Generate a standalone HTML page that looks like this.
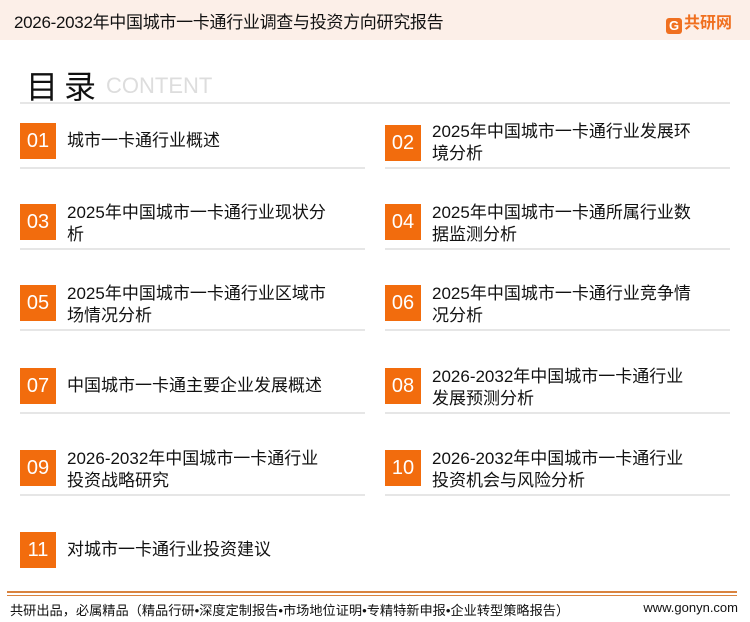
<!DOCTYPE html><html><head><meta charset="utf-8"><style>
body{margin:0;width:750px;height:622px;background:#fff;font-family:"Liberation Sans","Noto Sans CJK SC",sans-serif;position:relative;overflow:hidden;color:#111}
.hd{position:absolute;left:0;top:0;width:750px;height:40px;background:#fcefe8}
.t{position:absolute;left:14px;top:8px;font-size:17px;letter-spacing:-0.3px}
.logo{position:absolute;left:666px;top:9px;font-size:16px;font-weight:bold;color:#f07020}
.logo b{display:inline-block;width:16px;height:16px;background:#f07020;color:#fff;font-size:13px;text-align:center;line-height:16px;border-radius:3px;margin-right:2px;vertical-align:-2px}
.ml{position:absolute;left:26px;top:62px;font-size:32px;letter-spacing:6px}
.ct{position:absolute;left:106px;top:73px;font-size:22px;color:#ddd}
.hr{position:absolute;height:2px;background:#e6e6e6}
.n{position:absolute;width:36px;height:36px;background:#f26c0d;color:#fff;font-size:20px;line-height:36px;text-align:center}
.x{position:absolute;font-size:17px;line-height:22px;white-space:nowrap}
.f1{position:absolute;left:7px;top:591px;width:730px;height:2px;background:#d9833f}
.f2{position:absolute;left:7px;top:595px;width:730px;height:1px;background:#d9833f}
.ft{position:absolute;left:10px;top:600px;font-size:13.2px}
.fr{position:absolute;right:12px;top:600px;font-size:13px}
</style></head><body>
<div class="hd"></div>
<div class="t">2026-2032年中国城市一卡通行业调查与投资方向研究报告</div>
<div class="logo"><b>G</b>共研网</div>
<div class="ml">目录</div><div class="ct">CONTENT</div>
<div class="hr" style="left:20px;top:102px;width:710px"></div>

<div class="n" style="left:20px;top:123px">01</div><div class="x" style="left:67px;top:130px">城市一卡通行业概述</div>
<div class="n" style="left:385px;top:125px">02</div><div class="x" style="left:432px;top:121px">2025年中国城市一卡通行业发展环<br>境分析</div>
<div class="hr" style="left:20px;top:167px;width:345px"></div><div class="hr" style="left:385px;top:167px;width:345px"></div>

<div class="n" style="left:20px;top:204px">03</div><div class="x" style="left:67px;top:202px">2025年中国城市一卡通行业现状分<br>析</div>
<div class="n" style="left:385px;top:204px">04</div><div class="x" style="left:432px;top:202px">2025年中国城市一卡通所属行业数<br>据监测分析</div>
<div class="hr" style="left:20px;top:248px;width:345px"></div><div class="hr" style="left:385px;top:248px;width:345px"></div>

<div class="n" style="left:20px;top:285px">05</div><div class="x" style="left:67px;top:283px">2025年中国城市一卡通行业区域市<br>场情况分析</div>
<div class="n" style="left:385px;top:285px">06</div><div class="x" style="left:432px;top:283px">2025年中国城市一卡通行业竞争情<br>况分析</div>
<div class="hr" style="left:20px;top:329px;width:345px"></div><div class="hr" style="left:385px;top:329px;width:345px"></div>

<div class="n" style="left:20px;top:368px">07</div><div class="x" style="left:67px;top:375px">中国城市一卡通主要企业发展概述</div>
<div class="n" style="left:385px;top:368px">08</div><div class="x" style="left:432px;top:366px">2026-2032年中国城市一卡通行业<br>发展预测分析</div>
<div class="hr" style="left:20px;top:412px;width:345px"></div><div class="hr" style="left:385px;top:412px;width:345px"></div>

<div class="n" style="left:20px;top:450px">09</div><div class="x" style="left:67px;top:448px">2026-2032年中国城市一卡通行业<br>投资战略研究</div>
<div class="n" style="left:385px;top:450px">10</div><div class="x" style="left:432px;top:448px">2026-2032年中国城市一卡通行业<br>投资机会与风险分析</div>
<div class="hr" style="left:20px;top:494px;width:345px"></div><div class="hr" style="left:385px;top:494px;width:345px"></div>

<div class="n" style="left:20px;top:532px">11</div><div class="x" style="left:67px;top:539px">对城市一卡通行业投资建议</div>

<div class="f1"></div><div class="f2"></div>
<div class="ft">共研出品，必属精品（精品行研•深度定制报告•市场地位证明•专精特新申报•企业转型策略报告）</div>
<div class="fr">www.gonyn.com</div>
</body></html>
